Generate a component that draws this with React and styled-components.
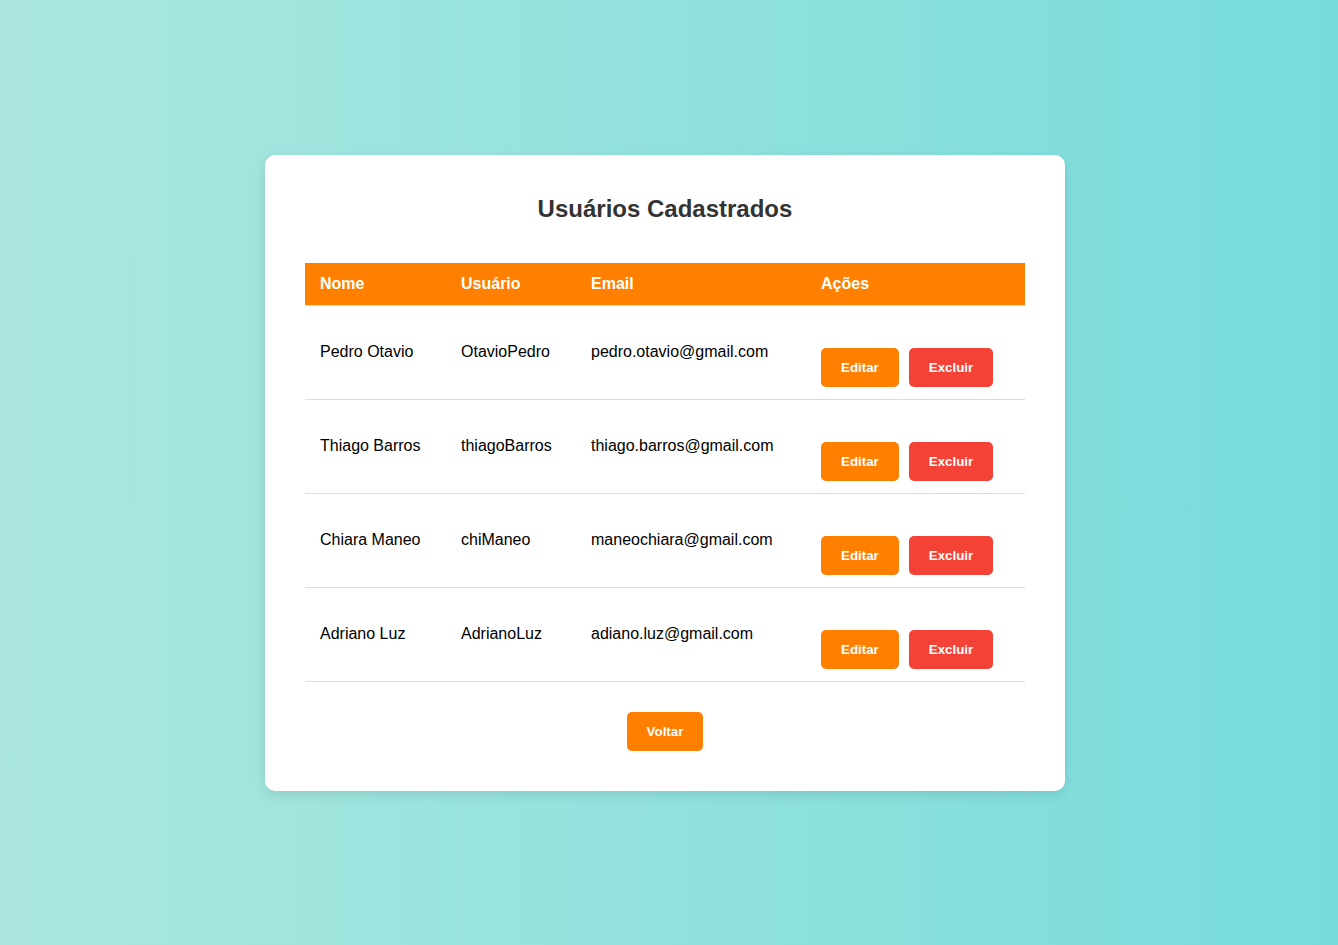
import React from "react";
import styled, { createGlobalStyle } from "styled-components";

const GlobalStyle = createGlobalStyle`
  html, body {
    margin: 0;
    padding: 0;
  }
  body {
    font-family: "Liberation Sans", Arial, sans-serif;
  }
`;

const Page = styled.div`
  min-height: 100vh;
  display: flex;
  align-items: center;
  justify-content: center;
  padding-right: 8px;
  box-sizing: border-box;
  background: linear-gradient(to right, #abe7de, #77dbdc);
`;

const Card = styled.div`
  width: 800px;
  box-sizing: border-box;
  padding: 40px;
  background: #fff;
  border-radius: 10px;
  box-shadow: 0 4px 12px rgba(0, 0, 0, 0.1);
  display: flex;
  flex-direction: column;
  align-items: center;
`;

const Title = styled.h2`
  margin: 0 0 40px;
  font-size: 24px;
  line-height: 28px;
  color: #333;
`;

const Table = styled.table`
  width: 100%;
  border-collapse: collapse;
  table-layout: fixed;
`;

const Col = styled.col`
  width: ${(p) => p.$w}px;
`;

const Th = styled.th`
  background: #ff7f00;
  color: #fff;
  text-align: left;
  font-size: 16px;
  line-height: 18px;
  padding: 12px 15px;
  border-bottom: 1px solid #ddd;
  white-space: nowrap;
`;

const Td = styled.td`
  padding: 12px 15px;
  font-size: 16px;
  line-height: 18px;
  color: #000;
  border-bottom: 1px solid #ddd;
  vertical-align: middle;
  white-space: nowrap;
`;

const Actions = styled.div`
  display: flex;
  gap: 10px;
  margin-top: 30px;
`;

const Button = styled.button`
  font-family: "Liberation Sans", Arial, sans-serif;
  font-size: 13.33px;
  font-weight: bold;
  line-height: 15px;
  color: #fff;
  background: ${(p) => (p.$danger ? "#f44336" : "#ff7f00")};
  border: none;
  border-radius: 5px;
  padding: 12px 20px;
  cursor: pointer;
`;

const BackButton = styled(Button)`
  margin-top: 30px;
`;

const users = [
  { id: 1, name: "Pedro Otavio", user: "OtavioPedro", email: "pedro.otavio@gmail.com" },
  { id: 2, name: "Thiago Barros", user: "thiagoBarros", email: "thiago.barros@gmail.com" },
  { id: 3, name: "Chiara Maneo", user: "chiManeo", email: "maneochiara@gmail.com" },
  { id: 4, name: "Adriano Luz", user: "AdrianoLuz", email: "adiano.luz@gmail.com" },
];

const App = () => {
  return (
    <>
      <GlobalStyle />
      <Page>
        <Card>
          <Title>Usuários Cadastrados</Title>
          <Table>
            <colgroup>
              <Col $w={141} />
              <Col $w={130} />
              <Col $w={230} />
              <Col $w={219} />
            </colgroup>
            <thead>
              <tr>
                <Th>Nome</Th>
                <Th>Usuário</Th>
                <Th>Email</Th>
                <Th>Ações</Th>
              </tr>
            </thead>
            <tbody>
              {users.map((u) => (
                <tr key={u.id}>
                  <Td>{u.name}</Td>
                  <Td>{u.user}</Td>
                  <Td>{u.email}</Td>
                  <Td>
                    <Actions>
                      <Button>Editar</Button>
                      <Button $danger>Excluir</Button>
                    </Actions>
                  </Td>
                </tr>
              ))}
            </tbody>
          </Table>
          <BackButton>Voltar</BackButton>
        </Card>
      </Page>
    </>
  );
};

export default App;
